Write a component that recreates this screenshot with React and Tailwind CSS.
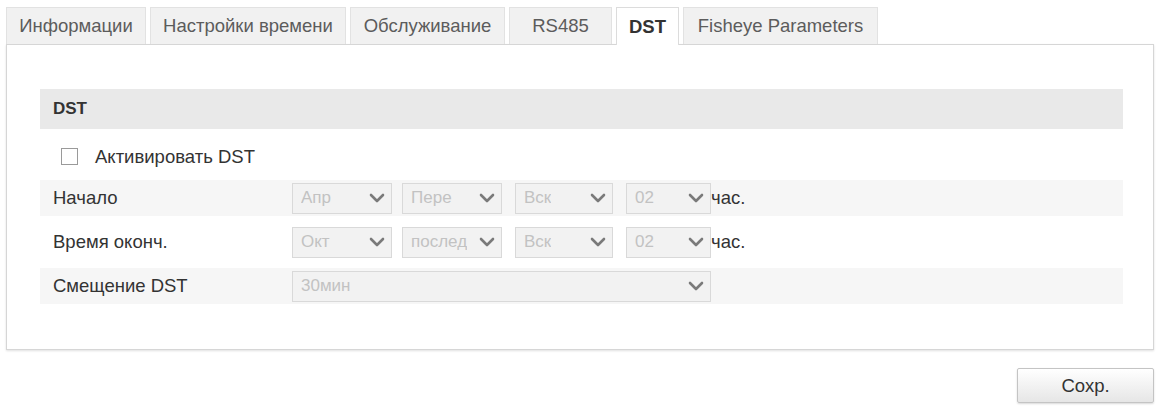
import { useState } from "react";

const tabs = [
  { label: "Информации", w: "w-[140px]" },
  { label: "Настройки времени", w: "w-[196px]" },
  { label: "Обслуживание", w: "w-[155px]" },
  { label: "RS485", w: "w-[103px]" },
  { label: "DST", w: "w-[63px]" },
  { label: "Fisheye Parameters", w: "w-[195px]" },
];

function Chevron() {
  return (
    <svg width="16" height="10" viewBox="0 0 16 10" fill="none">
      <path d="M2 2l6 6 6-6" stroke="#7a7a7a" strokeWidth="2.6" strokeLinecap="round" strokeLinejoin="round" />
    </svg>
  );
}

function Select({ value, className }) {
  return (
    <div
      className={`flex items-center justify-between h-[31px] border border-[#d9d9d9] bg-[#f2f2f2] pl-[8px] pr-[6px] text-[17px] text-[#c2c2c2] ${className}`}
    >
      <span className="truncate">{value}</span>
      <Chevron />
    </div>
  );
}

function Row({ label, shaded, children }) {
  return (
    <div className={`flex items-center h-[36px] ${shaded ? "bg-[#f6f6f6]" : ""}`}>
      <div className="w-[252px] pl-[13px] text-[18.5px] text-[#333]">{label}</div>
      <div className="flex items-center">{children}</div>
    </div>
  );
}

export default function App() {
  const [active, setActive] = useState(4);
  const [enabled, setEnabled] = useState(false);

  return (
    <div className="w-[1159px] h-[412px] bg-white font-['Liberation_Sans',Arial,sans-serif] overflow-hidden">
      {/* tab strip */}
      <div className="flex gap-[4px] pl-[6px] pt-[7px]">
        {tabs.map((t, i) => (
          <button
            key={t.label}
            onClick={() => setActive(i)}
            className={`${t.w} h-[37px] border border-b-0 text-[18.5px] ${
              i === active
                ? "bg-white border-[#dcdcdc] text-[#333] font-bold relative z-10 h-[38px]"
                : "bg-[#f1f1f1] border-[#e2e2e2] text-[#5c5c5c]"
            }`}
          >
            {t.label}
          </button>
        ))}
      </div>

      {/* panel */}
      <div className="ml-[6px] mr-[5px] -mt-px h-[306px] border border-[#d6d6d6] shadow-[0_1px_2px_rgba(0,0,0,0.12)] pt-[44px] pl-[33px] pr-[30px]">
        <div className="h-[40px] bg-[#e9e9e9] flex items-center pl-[13px] text-[17px] font-bold text-[#333]">
          DST
        </div>

        <label className="flex items-center h-[48px] pt-[7px] pl-[21px] gap-[17px] text-[18.5px] text-[#333] cursor-pointer">
          <input
            type="checkbox"
            checked={enabled}
            onChange={(e) => setEnabled(e.target.checked)}
            className="appearance-none w-[17px] h-[17px] border border-[#9a9a9a] bg-white"
          />
          Активировать DST
        </label>

        <div className="flex flex-col gap-[8px] mt-[3px]">
          <Row label="Начало" shaded>
            <Select value="Апр" className="w-[100px]" />
            <Select value="Пере" className="w-[100px] ml-[10px]" />
            <Select value="Вск" className="w-[98px] ml-[13px]" />
            <Select value="02" className="w-[85px] ml-[13px]" />
            <span className="text-[18.5px] text-[#333]">час.</span>
          </Row>
          <Row label="Время оконч.">
            <Select value="Окт" className="w-[100px]" />
            <Select value="послед" className="w-[100px] ml-[10px]" />
            <Select value="Вск" className="w-[98px] ml-[13px]" />
            <Select value="02" className="w-[85px] ml-[13px]" />
            <span className="text-[18.5px] text-[#333]">час.</span>
          </Row>
          <Row label="Смещение DST" shaded>
            <Select value="30мин" className="w-[419px]" />
          </Row>
        </div>
      </div>

      {/* save */}
      <div className="flex justify-end pr-[5px] pt-[18px]">
        <button className="w-[137px] h-[35px] border border-[#c4c4c4] rounded-[2px] bg-gradient-to-b from-white to-[#e6e6e6] shadow-[0_1px_2px_rgba(0,0,0,0.15)] text-[18.5px] text-[#333]">
          Сохр.
        </button>
      </div>
    </div>
  );
}
